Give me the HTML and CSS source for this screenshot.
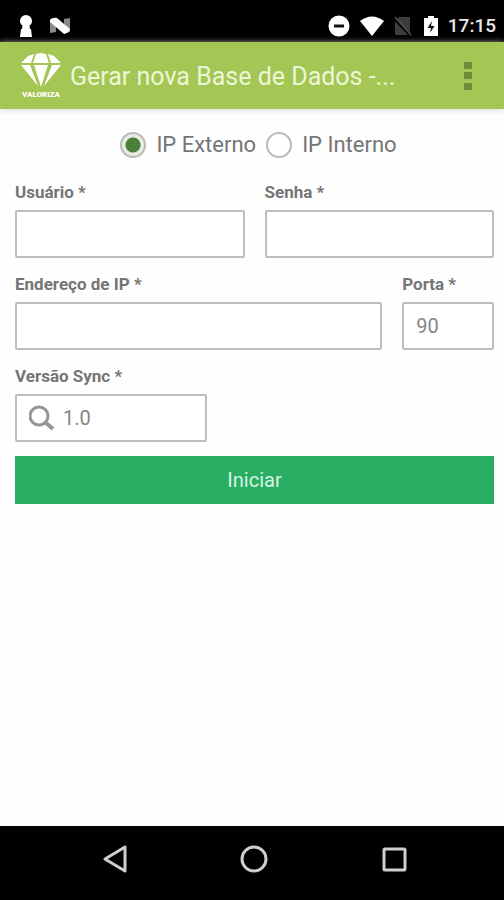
FILE: index.html
```html
<!DOCTYPE html>
<html lang="pt-BR">
<head>
<meta charset="utf-8">
<meta name="viewport" content="width=device-width, initial-scale=1">
<title>Gerar nova Base de Dados</title>
<link rel="stylesheet" href="styles.css">
</head>
<body>
<div class="status-bar">
  <div class="status-group status-notifications">
    <svg width="14" height="24" viewBox="0 0 14 24" fill="#fff" aria-hidden="true"><path d="M7 1a6 6 0 0 1 6 6c0 2-1 3.600-2.500 4.600L11 15h1l1 8H1l1-8h1l.5-3.400C2 10.600 1 9 1 7a6 6 0 0 1 6-6z"/></svg>
    <svg width="22" height="18" viewBox="0 0 22 18" aria-hidden="true"><path d="M1 2l6-1v14l-6 1zM15 2l6-1v14l-6 1z" fill="#8a8a8a"/><path d="M1 3q3-3 7-2l13 11q-1 4-6 5L1 5z" fill="#fff"/></svg>
  </div>
  <div class="status-group">
    <svg width="22" height="22" viewBox="0 0 22 22" aria-hidden="true"><circle cx="11" cy="11" r="10.500" fill="#fff"/><path d="M6 11h10" stroke="#111" stroke-width="3"/></svg>
    <svg width="24" height="20" viewBox="0 0 24 20" fill="#fff" aria-hidden="true"><path d="M0 5Q12-4 24 5L12 20z"/></svg>
    <svg width="18" height="20" viewBox="0 0 18 20" aria-hidden="true"><path d="M1 5l4-4h11v18H1z" fill="#3c3c3c"/><path d="M0 2l17 18" stroke="#000" stroke-width="3"/><path d="M1 1l16 18" stroke="#555" stroke-width="1.500"/></svg>
    <svg class="icon-battery" width="14" height="22" viewBox="0 0 14 22" aria-hidden="true"><path d="M4 1h6v2h4v18H0V3h4z" fill="#fff"/><path d="M8 6l-4.500 7H7l-1 5 4.500-7H7z" fill="#111"/></svg>
    <time class="clock">17:15</time>
  </div>
</div>

<header class="app-bar">
  <div class="brand">
    <svg width="40" height="36" viewBox="0 0 40 36" fill="#fff" aria-hidden="true">
      <path d="M7 3l6-2-3 9H0zM15 1l5-1 5 1 3 9H12zM27 1l6 2 7 7H30z"/>
      <path d="M0 12h9l8 21zM13 12h14L20 34zM31 12h9L23 33z"/>
    </svg>
    <span class="brand-name">VALORIZA</span>
  </div>
  <h1 class="title">Gerar nova Base de Dados -...</h1>
  <button class="menu" type="button" aria-label="Menu">
    <svg width="8" height="28" viewBox="0 0 8 28" fill="#6f8b39" aria-hidden="true"><path d="M0 0h8v7H0zM0 10h8v7H0zM0 21h8v7H0z"/></svg>
  </button>
</header>

<main class="content">
  <form class="form">
    <div class="radios" role="radiogroup">
      <label class="radio"><input type="radio" name="ip" checked>IP Externo</label>
      <label class="radio"><input type="radio" name="ip">IP Interno</label>
    </div>
    <div class="row row-halves">
      <div class="field"><label for="user">Usuário *</label><input class="box" id="user" type="text"></div>
      <div class="field"><label for="password">Senha *</label><input class="box" id="password" type="password"></div>
    </div>
    <div class="row row-address">
      <div class="field"><label for="address">Endereço de IP *</label><input class="box" id="address" type="text"></div>
      <div class="field"><label for="port">Porta *</label><input class="box" id="port" type="text" value="90"></div>
    </div>
    <div class="row row-version">
      <div class="field">
        <label for="version">Versão Sync *</label>
        <div class="box search">
          <svg width="26" height="26" viewBox="0 0 26 26" fill="none" stroke="#959595" aria-hidden="true"><circle cx="10" cy="11" r="9" stroke-width="3"/><path d="M16 17l8 7" stroke-width="4"/></svg>
          <input id="version" type="text" value="1.0">
        </div>
      </div>
    </div>
    <button class="submit" type="button">Iniciar</button>
  </form>
</main>

<nav class="nav-bar">
  <button type="button" aria-label="Voltar"><svg width="28" height="28" viewBox="0 0 28 28" aria-hidden="true"><path d="M24 2v24L4 14z"/></svg></button>
  <button type="button" aria-label="Início"><svg width="28" height="28" viewBox="0 0 28 28" aria-hidden="true"><circle cx="14" cy="14" r="12"/></svg></button>
  <button type="button" aria-label="Recentes"><svg width="28" height="28" viewBox="0 0 28 28" aria-hidden="true"><rect x="5" y="4" width="21" height="21" rx="1"/></svg></button>
</nav>
</body>
</html>
```
FILE: styles.css
```css
* {
  box-sizing: border-box;
}

body {
  margin: 0;
  min-height: 100vh;
  display: flex;
  flex-direction: column;
  background: #fefefe;
  color: #757575;
  font-family: Roboto, "Liberation Sans", sans-serif;
}

button,
input {
  font: inherit;
  color: inherit;
}

button {
  border: 0;
  padding: 0;
  background: none;
}

svg {
  display: block;
  flex: none;
}

.status-bar {
  display: flex;
  justify-content: space-between;
  align-items: center;
  height: 42px;
  padding: 10px 8px 0 19px;
  background: #000;
  color: #e8e8e8;
}

.status-group {
  display: flex;
  align-items: center;
  gap: 10px;
}

.status-notifications {
  gap: 16px;
}

.icon-battery {
  margin-left: 2px;
}

.clock {
  font-size: 19px;
  font-weight: 500;
  line-height: 24px;
}

.app-bar {
  display: flex;
  align-items: center;
  height: 67px;
  padding: 0 24px 0 20px;
  background: #a3c655;
  box-shadow: 0 1px 6px #d8d8d8;
}

.brand {
  display: flex;
  flex-direction: column;
  align-items: center;
  gap: 2px;
  width: 42px;
}

.brand-name {
  color: #fff;
  font-size: 8px;
  font-weight: 900;
  line-height: 8px;
}

.title {
  flex: 1;
  margin: 0 0 0 8px;
  padding-top: 2px;
  overflow: hidden;
  color: #edf6d6;
  font-size: 25px;
  font-weight: 400;
  line-height: 32px;
  white-space: nowrap;
}

.menu {
  padding: 8px;
}

.content {
  flex: 1;
  padding: 22px 10px 22px 15px;
}

.form {
  display: flex;
  flex-direction: column;
}

.radios {
  display: flex;
  justify-content: center;
  gap: 10px;
  margin-bottom: 23px;
  padding-left: 8px;
}

.radio {
  display: flex;
  align-items: center;
  gap: 10px;
  font-size: 22px;
  line-height: 28px;
}

.radio input {
  appearance: none;
  width: 26px;
  height: 26px;
  margin: 0;
  border: 2px solid #b9b9b9;
  border-radius: 50%;
  background: #fff;
}

.radio input:checked {
  background: radial-gradient(circle, #4b8039 7px, #e6ece3 8px);
}

.row {
  display: grid;
  gap: 20px;
  margin-bottom: 16px;
}

.row-halves {
  grid-template-columns: 1fr 1fr;
}

.row-address {
  grid-template-columns: 4fr 1fr;
}

.row-version {
  grid-template-columns: 40%;
  margin-bottom: 14px;
}

.field {
  display: flex;
  flex-direction: column;
  gap: 8px;
  min-width: 0;
}

.field label {
  font-size: 17px;
  font-weight: 700;
  line-height: 20px;
}

.box {
  width: 100%;
  height: 48px;
  padding: 0 12px;
  border: 2px solid #bebebe;
  border-radius: 2px;
  background: #fff;
  color: #858585;
  font-size: 20px;
}

.search {
  display: flex;
  align-items: center;
  gap: 8px;
}

.search input {
  flex: 1;
  min-width: 0;
  padding: 0;
  border: 0;
  background: none;
}

.submit {
  height: 48px;
  background: #29ad62;
  color: #d9f3e4;
  font-size: 20px;
}

.nav-bar {
  display: grid;
  grid-template-columns: 1fr 1fr 1fr;
  justify-items: center;
  height: 74px;
  padding: 0 42px 8px 45px;
  background: #000;
}

.nav-bar svg {
  fill: none;
  stroke: #cfcfcf;
  stroke-width: 3;
  stroke-linejoin: round;
}
```
